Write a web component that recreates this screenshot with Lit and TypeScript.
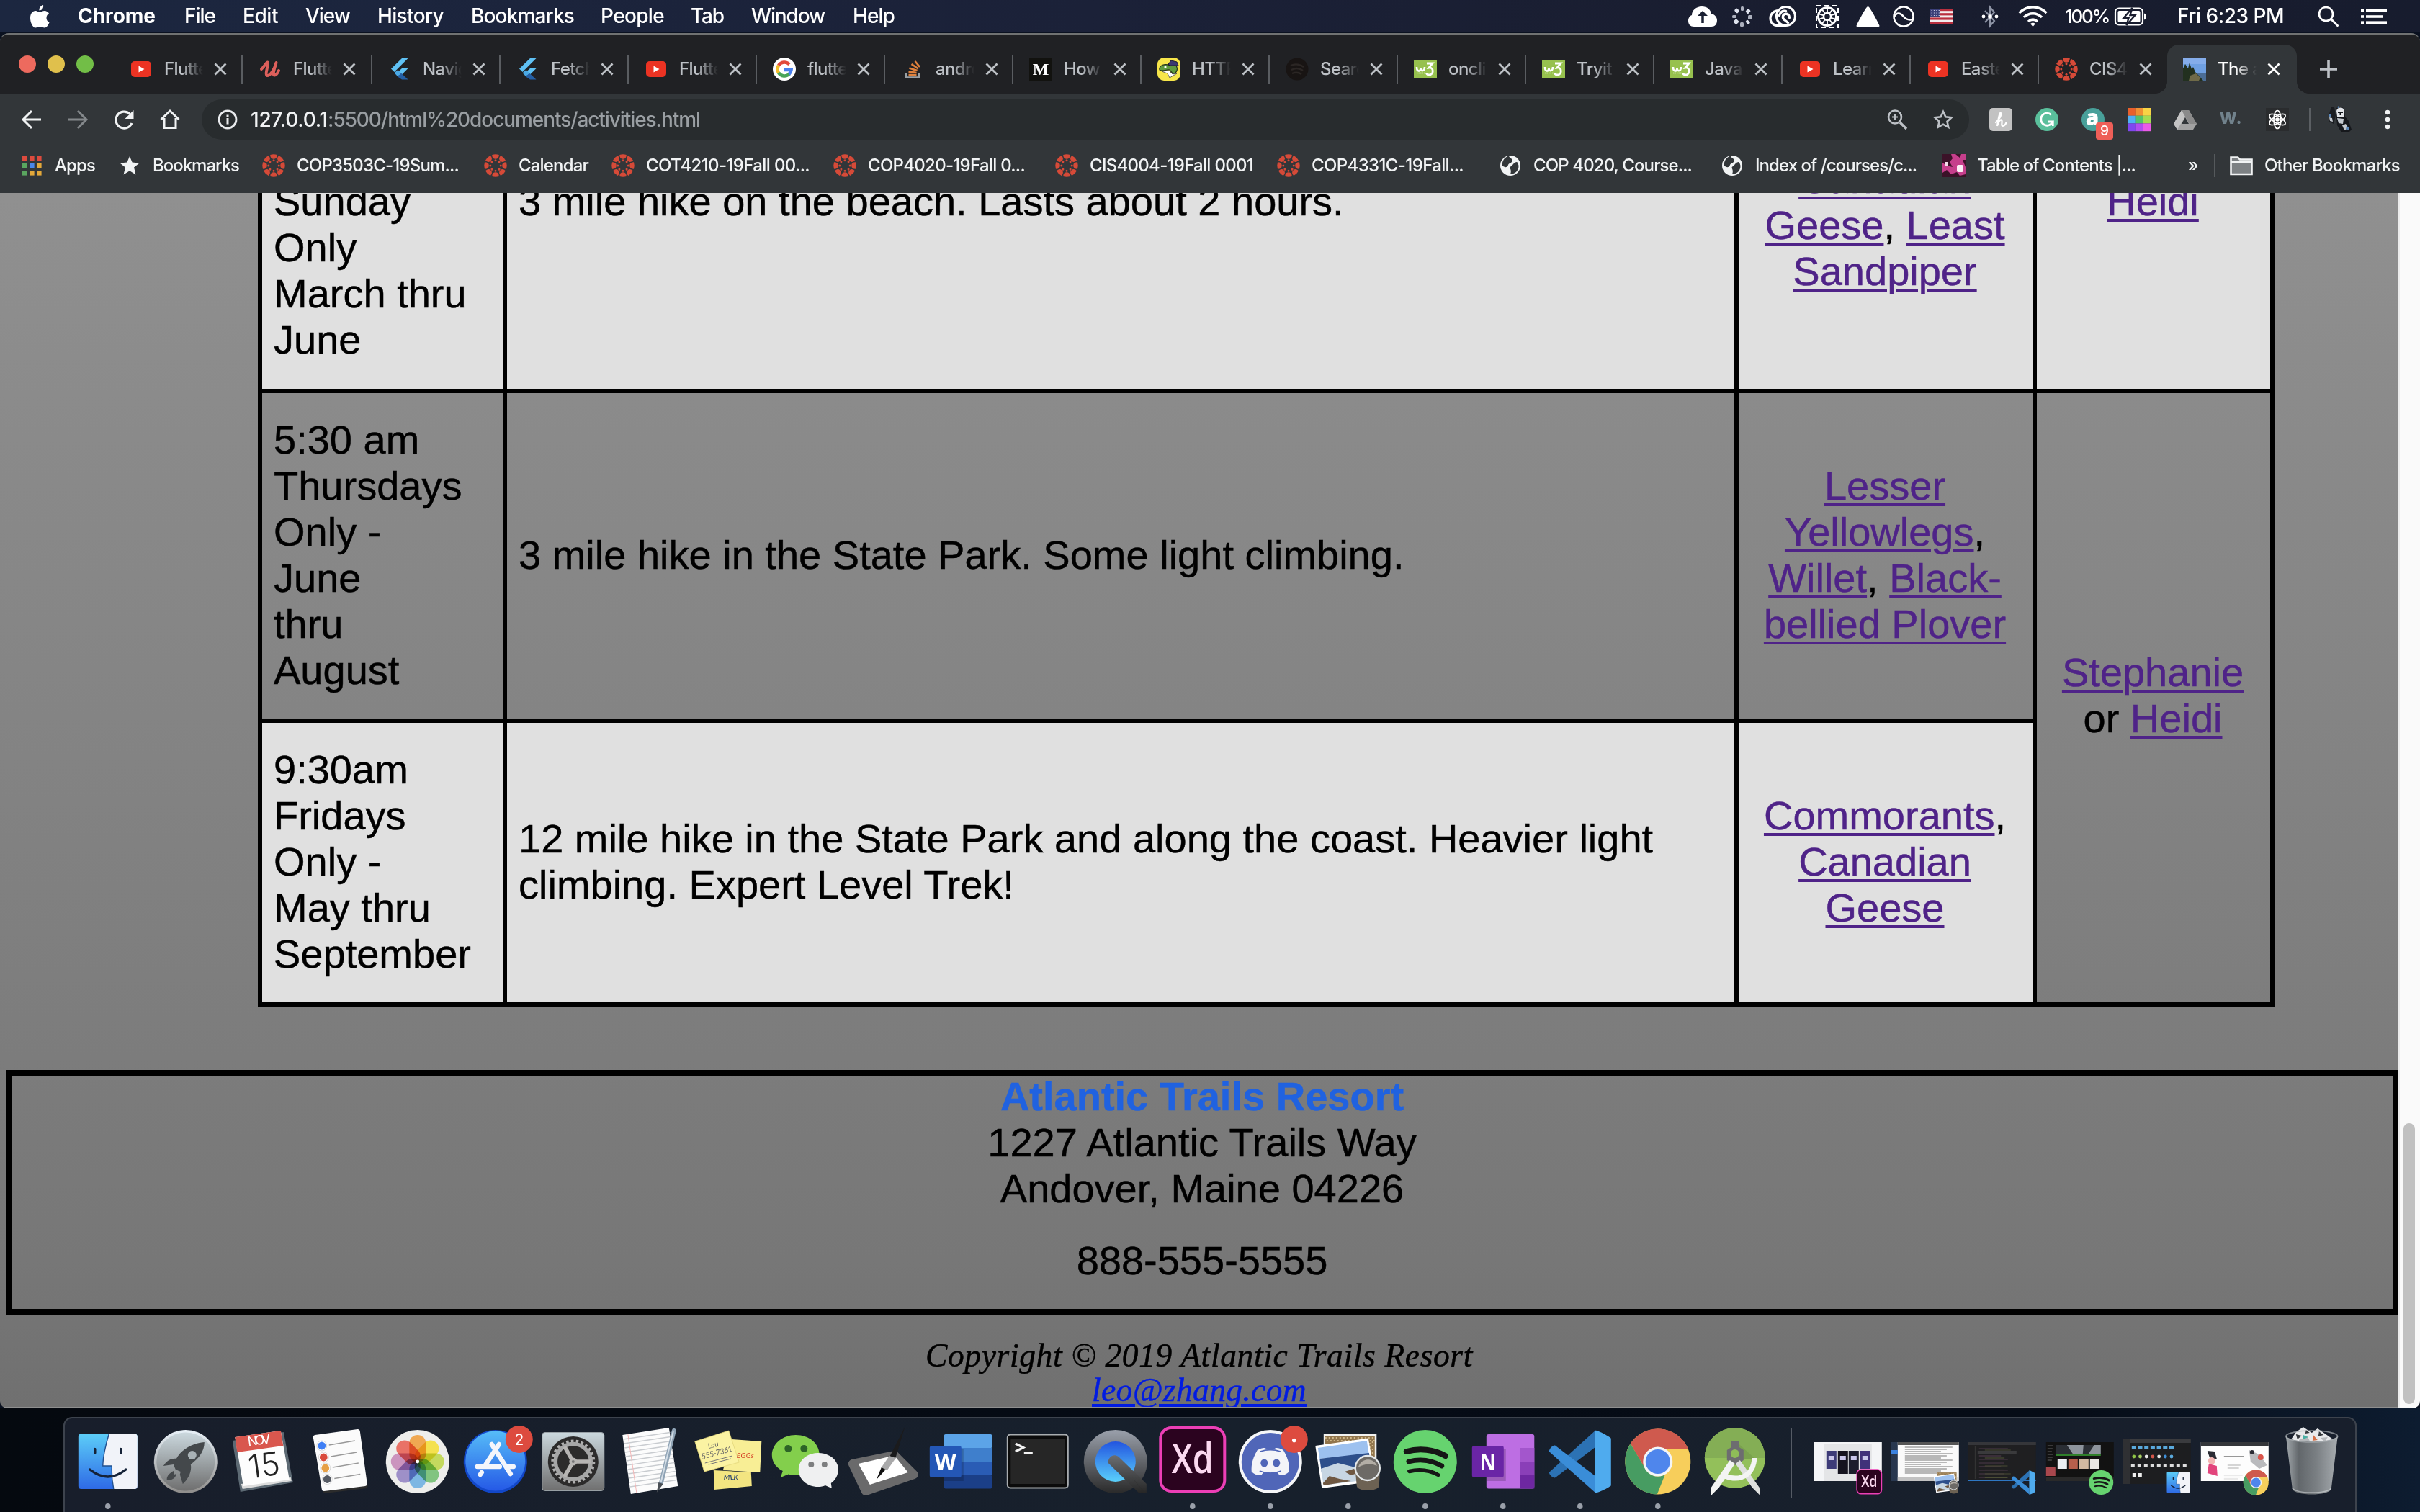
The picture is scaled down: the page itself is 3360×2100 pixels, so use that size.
import { LitElement, html, svg, css, nothing } from "lit";
import { customElement, property, query } from "lit/decorators.js";

/* A centred drawing surface: (0,0) is the middle of a w x h box. */
const ico = (w: number, h: number, body: unknown) => html`<svg
  width=${w} height=${h} viewBox="${-w / 2} ${-h / 2} ${w} ${h}" fill="none" style="display:block;flex:none;overflow:visible">${body}</svg>`;

const ring = (n: number, draw: (k: number) => unknown) =>
  Array.from({ length: n }, (_, k) => svg`<g transform="rotate(${(360 / n) * k})">${draw(k)}</g>`);

/* One line of text tracked so that it fills a given width. */
@customElement("fit-text")
class FitText extends LitElement {
  static styles = css`
    :host { display: inline-block; white-space: pre; flex: none; text-decoration: inherit; }
    .run { text-decoration: inherit; }
  `;
  @property({ type: Number }) w = 0;
  @property() text = "";
  @query(".run") run!: HTMLElement;
  firstUpdated() {
    const natural = this.run.getBoundingClientRect().width;
    const gap = (this.w - natural) / Math.max(1, this.text.length);
    this.run.style.letterSpacing = `${gap.toFixed(3)}px`;
  }
  render() {
    return html`<span class="run">${this.text}</span>`;
  }
}

const fit = (text: string, w: number) => html`<fit-text .text=${text} .w=${w}></fit-text>`;

/* ------------------------------------------------------------------ */
/* Menu bar                                                            */
/* ------------------------------------------------------------------ */
@customElement("mac-menu-bar")
class MacMenuBar extends LitElement {
  static styles = css`
    :host {
      display: flex; justify-content: space-between; align-items: center;
      height: 45px; color: #fff; font: 500 28px/45px Inter, "Liberation Sans", sans-serif;
      background: linear-gradient(90deg, #1c2740 0%, #1b2138 45%, #191d2f 75%, #171c2e 100%);
    }
    .menus, .status { display: grid; align-items: center; height: 45px; }
    .menus { margin-left: 42px; grid-template-columns: 66px 148px 81px 87px 100px 130px 180px 125px 84px 141px auto; }
    .status { width: 1016px; grid-template-columns: 60px 52px 65px 56px 51px 52px 71px 51px 65px 69px 87px 195px 60px auto; }
    .app { font-weight: 700; }
    .menus > *, .status > * { display: block; height: 45px; }
    .small { font-size: 26px; }
    .cell { display: flex !important; align-items: center; }
  `;
  render() {
    const cell = (x: unknown) => html`<div class="cell">${x}</div>`;
    return html`
      <div class="menus">
        ${cell(ico(26, 32, svg`<path fill="#fff" d="M5,-16 C6,-12 3,-8.500 -.5,-8.500 C-1,-12 1.500,-15 5,-16 Z M0,-6 C2,-6 4,-8 7,-8 C9,-8 11.500,-6.800 13,-4.500 C8,-1.500 8.500,6 13.500,8 C12,12 9.500,15.500 7,15.500 C4.500,15.500 3.500,14 .5,14 C-2.500,14 -3.500,15.500 -6,15.500 C-9.500,15.500 -13,8 -13,2 C-13,-4.500 -9.500,-8 -5.800,-8 C-3.200,-8 -1.500,-6 0,-6 Z"/>`))}
        <div class="app">${fit("Chrome", 108)}</div>
        <div>${fit("File", 43)}</div>
        <div>${fit("Edit", 49)}</div>
        <div>${fit("View", 62)}</div>
        <div>${fit("History", 92)}</div>
        <div>${fit("Bookmarks", 143)}</div>
        <div>${fit("People", 88)}</div>
        <div>${fit("Tab", 46)}</div>
        <div>${fit("Window", 102)}</div>
        <div>${fit("Help", 58)}</div>
      </div>
      <div class="status">
        ${cell(ico(40, 28, svg`<path fill="#fff" d="M-12,14 C-17,14 -20,11 -20,6 C-20,2 -18,-1 -15,-2 C-15,-9 -9,-14 -1,-14 C6,-14 11,-10 12,-4 C17,-3 20,1 20,5 C20,11 17,14 12,14 Z"/><path stroke="#1a2033" stroke-width="3.500" d="M0,9 V-3"/><path fill="#1a2033" d="M-7,-1 L0,-8 L7,-1 Z"/>`))}
        ${cell(ico(30, 30, ring(8, (k) => svg`<rect x="-2" y="-14" width="${4 + (k % 3)}" height="6" rx="1.500" fill="#dfe3ee" opacity="${0.75 + (k % 2) * 0.25}"/>`)))}
        ${cell(ico(39, 29, svg`<circle cx="4" cy="0" r="13" stroke="#fff" stroke-width="3.200"/><path stroke="#fff" stroke-width="3.200" d="M-6,-8 C-13,-8 -17.500,-3 -17.500,3 C-17.500,9 -13,13 -7,13 H4"/><path stroke="#fff" stroke-width="3.400" stroke-linecap="round" d="M9,2 C9,-2 6,-4 3,-3 C-1,-2 -1,3 2,5 L7,9 M-5,-1 C-4,-6 0,-8 4,-7"/>`))}
        ${cell(ico(32, 30, svg`<rect x="-15" y="-15" width="30" height="30" fill="none" stroke="#fff" stroke-width="2" stroke-dasharray="7 4"/><circle r="12.500" stroke="#fff" stroke-width="3"/>${ring(10, () => svg`<path stroke="#fff" stroke-width="1.800" d="M0,-5 V-12"/>`)}<circle r="5" stroke="#fff" stroke-width="2.500"/>`))}
        ${cell(ico(33, 28, svg`<path fill="#fff" stroke="#fff" stroke-width="2" stroke-linejoin="round" d="M0,-13 C2,-13 15,12 15,13 L-15,13 C-15,12 -2,-13 0,-13Z"/>`))}
        ${cell(ico(30, 30, svg`<circle r="13.500" stroke="#fff" stroke-width="2.600"/><path stroke="#fff" stroke-width="2.600" d="M-13,0 C-9,-7 -4,-5 0,0 C4,5 8,5 12.500,4"/>`))}
        ${cell(ico(32, 22, svg`<rect x="-16" y="-11" width="32" height="22" fill="#f3eeee"/>${[0, 1, 2, 3].map((k) => svg`<rect x="-16" y="${-11 + k * 6.2}" width="32" height="3.200" fill="#b9303f"/>`)}<rect x="-16" y="-11" width="14" height="12" fill="#3b3f78"/>${[0, 1, 2].map((k) => svg`<path stroke="#c9cbe6" stroke-width="1" stroke-dasharray="1.200 2.200" d="M-14.500,${-8.5 + k * 3.5} H-3"/>`)}`))}
        ${cell(ico(24, 32, svg`<path stroke="#8d93a4" stroke-width="2.200" d="M-7,-8 L6,6 L0,13 V-13 L6,-6 L-7,8"/><circle cx="-9" r="2.400" fill="#fff"/><circle r="2.800" fill="#fff"/><circle cx="9" r="2.400" fill="#fff"/>`))}
        ${cell(ico(41, 30, svg`<g stroke="#fff" stroke-width="3.400"><path d="M-19,-5 C-8,-16 8,-16 19,-5"/><path d="M-12.500,1 C-5,-6 5,-6 12.500,1"/><path d="M-6.500,7 C-2,3 2,3 6.500,7"/></g><path fill="#fff" d="M-3.500,10 L0,14 L3.500,10 C1,8 -1,8 -3.500,10Z"/>`))}
        <div class="small">${fit("100%", 61)}</div>
        ${cell(ico(45, 26, svg`<rect x="-21.500" y="-11.500" width="38" height="23" rx="5" stroke="#fff" stroke-width="2.200"/><rect x="-18" y="-8" width="31" height="16" rx="2" fill="#fff"/><path fill="#fff" d="M18.500,-4.500 C22.500,-3 22.500,3 18.500,4.500Z"/><path fill="#fff" stroke="#1a1e30" stroke-width="2.400" d="M2,-12 L-10,2 H-3 L-6,12 L6,-2 H-1 Z"/>`))}
        <div>${fit("Fri 6:23 PM", 148)}</div>
        ${cell(ico(30, 28, svg`<circle cx="-3.500" cy="-3.500" r="9.500" stroke="#fff" stroke-width="2.600"/><path stroke="#fff" stroke-width="3" stroke-linecap="round" d="M4,4 L12.500,12.500"/>`))}
        ${cell(ico(36, 22, svg`<g fill="#fff"><rect x="-18" y="-10" width="4" height="3.600"/><rect x="-11" y="-10" width="29" height="3.600"/><rect x="-18" y="-1.800" width="4" height="3.600"/><rect x="-11" y="-1.800" width="23" height="3.600"/><rect x="-18" y="6.400" width="4" height="3.600"/><rect x="-11" y="6.400" width="29" height="3.600"/></g>`))}
      </div>`;
  }
}

/* ------------------------------------------------------------------ */
/* Favicons                                                            */
/* ------------------------------------------------------------------ */
const canvasIcon = () => ico(32, 32, ring(8, () => svg`<path fill="#d64a38" d="M-4.800,-15 A15.800 15.800 0 0 1 4.800,-15 L4.400,-12.500 A4.600 4.600 0 0 1 -4.400,-12.500 Z"/><circle cy="-7.200" r="1.500" fill="#d64a38"/>`));
const youtube = () => ico(32, 32, svg`<rect x="-14" y="-11" width="28" height="22" rx="5" fill="#ec3323"/><path fill="#fff" d="M-3.500,-4.500 L4.500,0 L-3.500,4.500Z"/>`);
const udemy = () => ico(32, 32, svg`<path stroke="#dd5f5b" stroke-width="4" stroke-linecap="round" stroke-linejoin="round" d="M-12,0 C-8,-3 -6,-9 -3.500,-9.500 C-1,-9 -8,8 -4,9 C1,9 6,0 8.500,-9 C6,0 3,8 6,8.500 C9,9 11,4 12,2"/>`);
const flutter = () => ico(32, 32, svg`<path fill="#5fc1f4" d="M3,-15 L11.500,-15 L-7.500,4 L-12,-0.500 Z"/><path fill="#5fc1f4" d="M3,-1 L11.500,-1 L1,9.500 L-4,5.200Z"/><path fill="#2560a6" d="M-3.500,10 L2,5.500 L11.500,14.500 H3 Z"/><path fill="#4aa9e6" d="M-7.500,5.200 L-2.500,1 L2,5.500 L-3,10Z"/>`);
const google = () => ico(32, 32, svg`<circle r="16" fill="#fff"/><g stroke-width="4.600"><path stroke="#e24a3b" d="M-8,-5 A9.500 9.500 0 0 1 7,-6.500"/><path stroke="#f4bd2c" d="M-8,5 A9.500 9.500 0 0 1 -8,-5"/><path stroke="#4aa55a" d="M7,6.500 A9.500 9.500 0 0 1 -8,5"/><path stroke="#4a80ee" d="M0,1 H9.500 A9.500 9.500 0 0 1 6.500,7"/></g>`);
const stack = () => ico(32, 32, svg`<path stroke="#9aa0a4" stroke-width="2.400" d="M-9,5 V11.500 H9 V5"/><g stroke="#e0813c" stroke-width="2.600"><path d="M-5.500,8 H5.500"/><path d="M-5.500,3.500 L5.500,5"/><path d="M-4.500,-1.500 L6.500,2"/><path d="M-1.500,-7 L8,-.5"/><path d="M3.500,-11 L10,-3"/></g>`);
const medium = () => ico(32, 32, svg`<rect x="-16" y="-16" width="32" height="32" fill="#12120f"/><text y="8" text-anchor="middle" font-family="Liberation Serif, serif" font-weight="700" font-size="24" fill="#fff">M</text>`);
const snake = () => ico(32, 32, svg`<rect x="-16" y="-16" width="32" height="32" rx="9" fill="#f7e64a"/><path fill="#5f9a3e" stroke="#22301c" stroke-width="1.200" d="M-13,1 C-14,-6 -5,-8 1,-5 L10,-5 C13,0 11,5 6,7 L1,1 C-4,0 -9,4 -13,1Z"/><path fill="#3a3870" stroke="#1c1c30" d="M-1,-7 L3,-12 L11,-10 L13,-5 L1,-5Z"/><path fill="#fff" stroke="#444" stroke-width=".8" d="M-10,3 L0,2 L5,7 L11,6 L1,12 L-2,6Z"/><circle cx="-5" cy="-3" r="1.600" fill="#fff"/>`);
const darkSpot = () => ico(32, 32, svg`<circle r="15.500" fill="#181413"/><g stroke="#2b2624" stroke-width="2.400"><path d="M-9,-5 C-2,-8 5,-6 9,-3"/><path d="M-8,1 C-2,-2 4,-1 8,2"/><path d="M-7,6 C-2,4 3,5 6,7"/></g>`);
const w3 = () => ico(32, 32, svg`<rect x="-16" y="-13" width="32" height="26" rx="1.500" fill="#97c14e"/><path stroke="#fff" stroke-width="2.600" d="M-12,-3 C-12,4 -7,4 -6.500,-1 C-6,4 -1,3 -1,-3"/><path stroke="#fff" stroke-width="2.800" d="M2,-8 H10 L5,-2 C12,-3 12,8 5,8 C3,8 2,7 1.500,5.500"/><path stroke="#e6f2cf" stroke-width="1.500" stroke-dasharray="1.500 1" d="M-12,5.500 H0"/>`);
const photo = () => ico(32, 32, svg`<rect x="-16" y="-16" width="32" height="32" fill="#6fa0e2"/><rect x="-16" y="-16" width="32" height="9" fill="#85adea"/><rect x="-16" y="5" width="32" height="11" fill="#4b6d96"/><path fill="#22301f" d="M-16,-1 L-13,-7 L-9,-1 L-7,-9 L-4,0 L-2,-3 L1,4 L6,9 L12,16 H-16Z"/><path fill="#6f6a48" d="M-6,9 L2,6 L8,12 L6,16 H-8Z"/>`);
const globe = () => ico(32, 32, svg`<circle r="14" fill="#f1f3f4"/><path fill="#323639" d="M-2,-13.500 C-8,-12 -12,-6 -11,0 C-8,3 -4,3 -3,-1 C-2,-4 4,-4 3,-8 C2,-10 -1,-10 -2,-13.500Z M9,-5 C5,-5 4,-1 1,1 C-3,3 3,5 0,12 C6,12 12,7 11.500,0 C11,-2 10,-5 9,-5Z"/>`);
const pink = () => ico(32, 32, svg`<rect x="-16" y="-16" width="32" height="32" fill="#c63f8c"/><path fill="#3b1228" d="M-16,-16 H-4 L-2,-10 L-6,-5 L-2,2 L-10,0 L-16,-4Z M-16,10 L-10,6 L-4,12 L4,9 L8,14 L16,12 V16 H-16Z M2,-16 H10 L8,-11Z M12,-8 H16 V2Z"/><rect x="-13" y="-5" width="5" height="5" fill="#f4dcea"/><rect x="4" y="-1" width="9" height="10" rx="2" fill="#fbeff5"/>`);

interface TabInfo { icon: () => unknown; title: string; }
const TABS: TabInfo[] = [
  { icon: youtube, title: "Flutte" }, { icon: udemy, title: "Flutte" }, { icon: flutter, title: "Navig" },
  { icon: flutter, title: "Fetch" }, { icon: youtube, title: "Flutte" }, { icon: google, title: "flutte" },
  { icon: stack, title: "andro" }, { icon: medium, title: "How" }, { icon: snake, title: "HTTP" },
  { icon: darkSpot, title: "Searc" }, { icon: w3, title: "onclic" }, { icon: w3, title: "Tryit" },
  { icon: w3, title: "Java" }, { icon: youtube, title: "Learn" }, { icon: youtube, title: "Easte" },
  { icon: canvasIcon, title: "CIS4" }, { icon: photo, title: "The a" },
];

/* ------------------------------------------------------------------ */
/* Browser frame: tab strip, toolbar, bookmarks                        */
/* ------------------------------------------------------------------ */
@customElement("browser-frame")
class BrowserFrame extends LitElement {
  static styles = css`
    :host { display: block; height: 222px; box-sizing: border-box; border-top: 2px solid #707272; border-radius: 12px 12px 0 0;
      overflow: hidden; background: #323639; font: 450 24px/32px Inter, "Liberation Sans", sans-serif; color: #f1f3f4; }
    .strip { display: flex; align-items: flex-end; height: 82px; background: #202124; }
    .lights { display: flex; gap: 16px; width: 132px; margin-left: 26px; align-self: flex-start; margin-top: 29px; }
    .light { width: 24px; height: 24px; border-radius: 50%; }
    .red { background: #ed6a5e; } .yellow { background: #e0c04c; } .green { background: #72be47; }
    .tab { display: flex; align-items: center; box-sizing: border-box; width: 178px; height: 68px; padding-left: 22px; color: #bdc1c6; flex: none; }
    .tab:nth-child(3) { width: 180px; }
    .tab:nth-child(2) { width: 179px; }
    .title { width: 54px; margin-left: 16px; overflow: hidden; white-space: nowrap; letter-spacing: -0.6px;
      mask-image: linear-gradient(90deg, #000 45%, transparent 100%); }
    .close { margin-left: 15px; }
    .rule { width: 2px; height: 40px; background: #5a5d61; margin-left: auto; }
    .tab.active { background: #323639; border-radius: 16px 16px 0 0; color: #fff; position: relative; width: 180px; }
    .tab.active::before, .tab.active::after { content: ""; position: absolute; bottom: 0; width: 16px; height: 16px; }
    .tab.active::before { left: -16px; background: radial-gradient(circle at 0 0, transparent 15.500px, #323639 16px); }
    .tab.active::after { right: -16px; background: radial-gradient(circle at 100% 0, transparent 15.500px, #323639 16px); }
    .plus { margin: 0 0 22px 32px; }
    .bar { display: flex; align-items: center; height: 72px; }
    .nav { display: flex; gap: 32px; margin-left: 28px; width: 252px; flex: none; }
    .omni { display: flex; align-items: center; box-sizing: border-box; width: 2454px; height: 56px; border-radius: 28px; background: #282c2e; padding: 0 20px; font-size: 28px; flex: none; }
    .host { margin-left: 16px; color: #f1f3f4; }
    .path { color: #9a9fa3; }
    .tools { display: flex; gap: 32px; margin-left: auto; }
    .exts { display: flex; gap: 32px; margin-left: 28px; }
    .badged { position: relative; }
    .badge { position: absolute; left: 20px; top: 20px; width: 24px; height: 24px; border-radius: 4px; background: #ee5f58; color: #fff; font-size: 19px; line-height: 24px; text-align: center; }
    .vr { width: 2px; height: 32px; background: #5b5f63; margin-left: 28px; flex: none; }
    .avatar { margin-left: 23px; }
    .kebab { margin-left: 32px; }
    .marks { display: grid; align-items: center; height: 66px; padding-left: 28px; margin-top: -5px;
      grid-template-columns: 136px 200px 308px 177px 308px 308px 308px 308px 308px 308px 341px 36px 22px auto; }
    .mark { display: flex; align-items: center; gap: 16px; }
  `;
  render() {
    const mark = (icon: unknown, t: string, w: number) => html`<div class="mark">${icon}${fit(t, w)}</div>`;
    const last = TABS.length - 1;
    return html`
      <div class="strip">
        <div class="lights"><div class="light red"></div><div class="light yellow"></div><div class="light green"></div></div>
        ${TABS.map((t, k) => html`
          <div class="tab ${k === last ? "active" : ""}">
            ${t.icon()}<div class="title">${t.title}</div>
            <div class="close">${ico(18, 18, svg`<path stroke="${k === last ? "#fff" : "#bdc1c6"}" stroke-width="2.800" d="M-7.500,-7.500 L7.500,7.500 M7.500,-7.500 L-7.500,7.500"/>`)}</div>
            ${k < last ? html`<div class="rule" ?hidden=${k === last - 1}></div>` : nothing}
          </div>`)}
        <div class="plus">${ico(24, 24, svg`<path stroke="#bdc1c6" stroke-width="3.600" d="M-12,0 H12 M0,-12 V12"/>`)}</div>
      </div>
      <div class="bar">
        <div class="nav">
          ${ico(32, 32, svg`<path stroke="#f1f3f4" stroke-width="3" d="M13,0 H-11 M0,-12 L-12,0 L0,12"/>`)}
          ${ico(32, 32, svg`<path stroke="#84888b" stroke-width="3" d="M-13,0 H11 M0,-12 L12,0 L0,12"/>`)}
          ${ico(32, 32, svg`<path stroke="#f1f3f4" stroke-width="3.200" d="M11,5 A11.500 11.500 0 1 1 8,-8"/><path fill="#f1f3f4" d="M13.500,-13 V-1 H1.500Z"/>`)}
          ${ico(32, 32, svg`<path stroke="#f1f3f4" stroke-width="3" d="M-12.500,0 L0,-12 L12.500,0 M-8,-2 V11.500 H8 V-2"/>`)}
        </div>
        <div class="omni">
          ${ico(32, 32, svg`<circle r="12" stroke="#e8eaed" stroke-width="2.800"/><path stroke="#e8eaed" stroke-width="3" d="M0,-2 V6.500 M0,-6.500 V-3.800"/>`)}
          <span class="host">${fit("127.0.0.1", 107)}</span><span class="path">${fit(":5500/html%20documents/activities.html", 517)}</span>
          <div class="tools">
            ${ico(32, 32, svg`<circle cx="-3" cy="-3.500" r="9" stroke="#bdc1c6" stroke-width="2.600"/><path stroke="#bdc1c6" stroke-width="3.400" d="M4,4 L13,13"/><path stroke="#bdc1c6" stroke-width="2" d="M-7,-3.500 H1 M-3,-7.500 V.5"/>`)}
            ${ico(32, 32, svg`<path stroke="#bdc1c6" stroke-width="2.600" stroke-linejoin="miter" d="M0,-11 L3.400,-3.600 L11.500,-2.700 L5.500,2.800 L7.200,10.800 L0,6.700 L-7.200,10.800 L-5.500,2.800 L-11.500,-2.700 L-3.400,-3.600Z"/>`)}
          </div>
        </div>
        <div class="exts">
          ${ico(32, 32, svg`<rect x="-16" y="-16" width="32" height="32" rx="5" fill="#c2c2c2"/><path stroke="#fff" stroke-width="2.200" stroke-linecap="round" d="M-7,4 C-2,0 1,-6 0,-9 C-2,-11 -4,3 -5,9 C-2,0 1,-1 1.500,2 C2,5 0,9 3,9 C5,9 7,6 7.500,4"/>`)}
          ${ico(32, 32, svg`<circle r="16" fill="#5abf9b"/><path stroke="#fff" stroke-width="2.800" d="M6,-6.500 A8.500 8.500 0 1 0 8,3 H2 M8.300,2 V9"/>`)}
          <div class="badged">
            ${ico(32, 32, svg`<circle r="16" fill="#48a09a"/><text x="-1" y="8" text-anchor="middle" font-family="Open Sans, sans-serif" font-weight="800" font-size="30" fill="#fff">a</text>`)}
            <div class="badge">9</div>
          </div>
          ${ico(32, 32, ["#e8602c", "#f09133", "#f8d345", "#4fb0f5", "#53c26b", "#a4dc52", "#7f47f0", "#b04df0", "#ea5be8"].map((c, k) => svg`<rect x="${-16 + (k % 3) * 10.7}" y="${-16 + Math.floor(k / 3) * 10.7}" width="10.800" height="10.800" fill="${c}"/>`))}
          ${ico(32, 32, svg`<path fill="#a2a2a2" d="M-5,-13 H5 L16,6 L11,14 H-11 L-16,6Z"/><path fill="#c4c4c4" d="M-5,-13 L-16,6 L-11,14 L0,-4Z"/><path fill="#8a8a8a" d="M-5,-13 H5 L16,6 H6Z"/><path fill="#323639" d="M0,-3 L5,6 H-5Z"/>`)}
          ${ico(32, 32, svg`<text x="-1" y="6" text-anchor="middle" font-family="Inter, sans-serif" font-weight="800" font-size="23" textLength="31" fill="#71828c">W.</text>`)}
          ${ico(32, 32, svg`<rect x="-16" y="-16" width="32" height="32" fill="#2a2c2e"/>${ring(3, () => svg`<ellipse rx="5" ry="12.500" stroke="#fff" stroke-width="1.700"/>`)}<circle r="2.800" fill="#fff"/>`)}
        </div>
        <div class="vr"></div>
        <div class="avatar">${ico(36, 38, svg`<path fill="#1a1c20" d="M-12,-18 L-8,-17 L-6,-6 L-9,6 L-16,2 L-15,-8Z"/><path fill="#16181c" d="M-6,-14 C-4,-19 5,-19 6,-13 L7,-4 L12,2 L16,14 L12,18 L2,18 L-4,8Z"/><path fill="#e4e6ea" d="M-5,-12 C-4,-18 6,-18 6,-11 L5,-4 H-4Z"/><path stroke="#16181c" stroke-width="2" d="M-3,-10 H4 M.5,-10 V-6"/><path fill="#c3c8ce" d="M-4,-2 L5,-1 L4,6 L-2,5Z M3,8 L8,6 L11,12 L6,15Z M-15,-3 L-11,-2 L-10,3 L-14,2Z"/><path fill="#5c87b8" d="M-15,-8 L-12,-7 L-12,-3 L-15,-4Z M9,9 L13,11 L12,15 L8,13Z M-4,-17 L-2,-19 L-1,-15Z"/>`)}</div>
        <div class="kebab">${ico(32, 32, svg`<g fill="#f1f3f4"><circle cy="-10" r="3.200"/><circle r="3.200"/><circle cy="10" r="3.200"/></g>`)}</div>
      </div>
      <div class="marks">
        ${mark(ico(32, 32, ["#dd4b3e", "#dd4b3e", "#dd4b3e", "#5aa55f", "#4a86e8", "#e3a83a", "#5aa55f", "#e3a83a", "#e3a83a"].map((c, k) => svg`<rect x="${-13 + (k % 3) * 10}" y="${-13 + Math.floor(k / 3) * 10}" width="6.600" height="6.600" fill="${c}"/>`)), "Apps", 56)}
        ${mark(ico(32, 32, svg`<path fill="#f1f3f4" d="M0,-13 L3.600,-4.600 L13.500,-3.600 L6,2.600 L8.500,12.500 L0,7.200 L-8.500,12.500 L-6,2.600 L-13.500,-3.600 L-3.600,-4.600Z"/>`), "Bookmarks", 120)}
        ${mark(canvasIcon(), "COP3503C-19Sum...", 225)}
        ${mark(canvasIcon(), "Calendar", 97)}
        ${mark(canvasIcon(), "COT4210-19Fall 00...", 227)}
        ${mark(canvasIcon(), "COP4020-19Fall 0...", 218)}
        ${mark(canvasIcon(), "CIS4004-19Fall 0001", 227)}
        ${mark(canvasIcon(), "COP4331C-19Fall...", 211)}
        ${mark(globe(), "COP 4020, Course...", 220)}
        ${mark(globe(), "Index of /courses/c...", 224)}
        ${mark(pink(), "Table of Contents |...", 220)}
        <div>${fit("»", 15)}</div>
        ${ico(2, 32, svg`<rect x="-1" y="-16" width="2" height="32" fill="#55595c"/>`)}
        ${mark(ico(32, 32, svg`<path fill="#7d8184" stroke="#f1f3f4" stroke-width="2.600" d="M-14.500,-11.500 H-5 L-2,-8.500 H14.500 V12 H-14.500Z"/><path stroke="#f1f3f4" stroke-width="3" d="M-14,-4.500 H14"/>`), "Other Bookmarks", 188)}
      </div>`;
  }
}

/* ------------------------------------------------------------------ */
/* The page shown in the window                                        */
/* ------------------------------------------------------------------ */
@customElement("resort-page")
class ResortPage extends LitElement {
  static styles = css`
    :host { display: flex; height: 1688px; box-sizing: border-box; overflow: hidden; border-radius: 0 0 10px 10px;
      font: 400 56px/64px "Liberation Sans", Arial, sans-serif; color: #000; -webkit-text-stroke: 0.5px currentColor; }
    .body { width: 3330px; flex: none; box-sizing: border-box; border-bottom: 2px solid #8f8f8f;
      background: linear-gradient(180deg, #909090 0%, #8a8a8a 20%, #848484 43%, #7d7d7d 68%, #777 88%, #707070 100%); overflow: hidden; height: 1688px; }
    .sheet { display: grid; grid-template-columns: 340px 1710px 414px 330px; grid-template-rows: 278px 458px 394px;
      margin-left: 358px; width: 2794px; border-left: 6px solid #000; }
    .cell { display: flex; flex-direction: column; justify-content: center; box-sizing: border-box; min-height: 0;
      border: solid #000; border-width: 0 6px 6px 0; padding: 0 16px 3px; }
    .cell > div { white-space: nowrap; }
    .first { justify-content: flex-end; }
    .when { padding-bottom: 36px; }
    .one { padding-bottom: 228px; }
    .three { padding-bottom: 131px; }
    .light { background: #e0e0e0; }
    .mid { text-align: center; padding-right: 18px; }
    .tall { grid-row: 2 / 4; grid-column: 4; padding-bottom: 6px; }
    a { color: #4f2388; text-decoration: underline; text-decoration-thickness: 4px; text-underline-offset: 5px; }
    .contact { box-sizing: border-box; height: 340px; margin: 88px 0 0 8px; border: 8px solid #000; text-align: center; }
    .contact > div { position: relative; top: -3px; }
    .name { font-weight: 700; color: #2062e0; }
    .phone { margin-top: 36px; }
    .legal { margin-top: 33px; text-align: center; font: italic 400 45.500px/48px Georgia, "Liberation Serif", serif; }
    .legal > div { height: 48px; }
    .legal a { color: #001be2; text-underline-offset: 4px; }
    .track { width: 30px; background: #fafafa; display: flex; flex-direction: column; align-items: center; justify-content: flex-end; box-sizing: border-box; padding: 0 2px 6px 0; border-left: 2px solid #ececec; }
    .thumb { width: 16px; height: 390px; border-radius: 8px; background: #c1c1c1; }
  `;
  render() {
    return html`
      <div class="body">
        <div class="sheet">
          <div class="cell light first when"><div>Sunday<br />Only<br />March thru<br />June</div></div>
          <div class="cell light first one"><div>3 mile hike on the beach. Lasts about 2 hours.</div></div>
          <div class="cell light first three mid"><div><a>Canadian<br />Geese</a>, <a>Least<br />Sandpiper</a></div></div>
          <div class="cell light first one mid"><div><a>Heidi</a></div></div>
          <div class="cell"><div>5:30 am<br />Thursdays<br />Only -<br />June<br />thru<br />August</div></div>
          <div class="cell"><div>3 mile hike in the State Park. Some light climbing.</div></div>
          <div class="cell mid"><div><a>Lesser<br />Yellowlegs</a>,<br /><a>Willet</a>, <a>Black-<br />bellied Plover</a></div></div>
          <div class="cell mid tall"><div><a>Stephanie</a><br />or <a>Heidi</a></div></div>
          <div class="cell light"><div>9:30am<br />Fridays<br />Only -<br />May thru<br />September</div></div>
          <div class="cell light"><div>12 mile hike in the State Park and along the coast. Heavier light<br />climbing. Expert Level Trek!</div></div>
          <div class="cell light mid"><div><a>Commorants</a>,<br /><a>Canadian<br />Geese</a></div></div>
        </div>
        <div class="contact">
          <div class="name">Atlantic Trails Resort</div>
          <div>1227 Atlantic Trails Way</div>
          <div>Andover, Maine 04226</div>
          <div class="phone">888-555-5555</div>
        </div>
        <div class="legal">
          <div>${fit("Copyright © 2019 Atlantic Trails Resort", 760)}</div>
          <div><a>${fit("leo@zhang.com", 298)}</a></div>
        </div>
      </div>
      <div class="track"><div class="thumb"></div></div>`;
  }
}

/* ------------------------------------------------------------------ */
/* Dock drawings, centred on (0,0)                                     */
/* ------------------------------------------------------------------ */
const finder = svg`<rect x="-41" y="-38.500" width="82" height="76.500" rx="4" fill="url(#gBlue)"/>
  <path fill="#f1f3f9" d="M1.500,-38.500 C-4,-20 -7,-8 -7,6 H5.500 C5,18 6,28 8,38 H37 Q41,38 41,34 V-34.500 Q41,-38.500 37,-38.500Z"/>
  <path stroke="#152238" stroke-width="3.400" stroke-linecap="round" d="M-18,-17.500 V-12 M18,-17.500 V-12 M-25,11 Q0,31 25,11"/>
  <path stroke="#20508f" stroke-width="1.400" d="M1.500,-38.500 C-4,-20 -7,-8 -7,6 H5.500 C5,18 6,28 8,38"/>`;
const launchpad = svg`<circle r="44" fill="url(#gRim)"/><circle r="40.500" fill="url(#gSteel)"/>
  <path fill="#44484b" d="M26,-27 C10,-26 -6,-17 -13,-4 C-21,-5 -27,0 -31,6 L-17,4 L-14,11 L-7,14 L-8,18 L-4,31 C3,25 9,14 7,4 C19,-5 26,-15 26,-27Z M-17,13 C-22,16 -27,20 -26,26 C-19,26 -14,23 -13,17 L-16,18Z"/><circle cx="9" cy="-9" r="6" fill="#a9b2b6"/>`;
const calendar = svg`<path fill="#5d6a74" d="M-42,-29 L29,-41 L42,29 L-31,42Z"/><path fill="#dcdcdc" d="M-30,31 L39,22 L40,27 L-28,38Z"/>
  <path fill="#fdfdfd" d="M-38.500,-34 L25,-43 L37,25 L-27,34Z"/><path fill="#d9574e" d="M-38.500,-34 L25,-43 L28.500,-22 L-35.500,-13Z"/>
  <g transform="rotate(-8)" fill="#fff" text-anchor="middle" font-family="Inter, sans-serif"><text x="-1" y="-24" font-size="18" textLength="32">NOV</text><text x="1" y="21" font-size="45" font-weight="300" fill="#222" textLength="44" lengthAdjust="spacingAndGlyphs">15</text></g>`;
const reminders = svg`<path fill="#2c2c2c" d="M-25,41 L38,32 L37,37 L-22,44Z"/><path fill="#fbfbfb" stroke="#fbfbfb" stroke-width="6" stroke-linejoin="round" d="M-35,-34 L24,-42 L34,31 L-23,38Z"/>
  ${[["#3f7ff5", -26, -22], ["#d94b3d", -23.5, -6], ["#e6a046", -21, 9], ["#565b64", -18.5, 24.5]].map(([c, x, y]) => svg`<circle cx="${x}" cy="${y}" r="7" fill="#fff" stroke="#d8d8d8" stroke-width="1"/><circle cx="${x}" cy="${y}" r="5.400" fill="${c}"/><path stroke="#999" stroke-width="1.400" d="M${Number(x) + 10},${Number(y) - 1} l36,-6"/>`)}`;
const photos = svg`<circle r="44" fill="#eeeeec"/><g style="isolation:isolate">${["#efa041", "#f4df3e", "#bfd64f", "#74bf74", "#70b0e2", "#9585c5", "#c789b9", "#e86458"].map((c, k) => svg`<rect transform="rotate(${k * 45})" x="-11.500" y="-37" width="23" height="38" rx="11.500" fill="${c}" opacity=".9" style="mix-blend-mode:multiply"/>`)}</g><circle r="2.400" fill="#fff"/>`;
const appStore = svg`<circle r="44" fill="#1247c8"/><circle r="41.500" cy="-1" fill="url(#gStore)"/>
  <g stroke="#f4f6fb" stroke-width="6.500" stroke-linecap="round"><path d="M-25,7 H6 M16,7 H25"/><path d="M5,-24 L-14,5 M-19,15 L-21,18"/><path d="M-5,-24 L21,17"/></g>
  <circle cx="33" cy="-31" r="19" fill="#dd4b3f"/><text x="33" y="-23.500" text-anchor="middle" font-family="Inter, sans-serif" font-size="21" fill="#fff">2</text>`;
const prefs = svg`<rect x="-43" y="-40.500" width="86" height="81" rx="4" fill="url(#gSteel)" stroke="#9aa2a6" stroke-width="1"/><circle r="35" fill="#2c2b2b"/>
  <circle r="28.500" stroke="#b0b0b0" stroke-width="4" stroke-dasharray="3.600 3.300"/><circle r="24.500" stroke="#a6a6a6" stroke-width="5.500"/><g transform="rotate(-30)">${ring(3, () => svg`<path stroke="#b7b5b3" stroke-width="5.500" d="M0,0 V-24" transform="rotate(120)"/>`)}</g><circle r="5.500" fill="#b7b5b3"/><circle r="2" fill="#777"/>`;
const textEdit = svg`<path fill="#fcfcfc" d="M-38.500,-37 L26,-47 L38.500,34 L-27,45Z"/>${Array.from({ length: 12 }, (_, k) => svg`<path stroke="#c9ccd0" stroke-width="1.300" d="M${-37.5 + k * 0.85},${-31 + k * 6} l65,-9.500"/>`)}
  <path stroke="#f3b6b6" stroke-width="1" d="M-31,-38 L-19,43"/><path stroke="#8fa3b5" stroke-width="6" stroke-linecap="round" d="M33,-43 L15,30"/><path stroke="#d3dde6" stroke-width="2" d="M32,-42 L15,28"/><path fill="#4a4f55" d="M11.500,29 L18,31 L9,43Z"/>`;
const stickies = svg`<path fill="#f3e581" d="M-20,12 L32,15 L33,34 L-19,39Z"/><path fill="#f8ee95" d="M5,-31 L46.500,-28 L44.500,15 L-7,12Z"/><path fill="#fbf3a3" stroke="#e2d57a" stroke-width=".8" d="M-46,-28 L1,-43 L15.500,1 L-33,14Z"/>
  <g font-family="Lato, sans-serif" font-style="italic"><text transform="translate(-27,-18) rotate(-14)" font-size="10" fill="#666">Lou</text><text transform="translate(-36,-3) rotate(-15)" font-size="11" fill="#666" textLength="44">555-7361</text><text x="12" y="-5" font-size="10" fill="#d43d25" textLength="24">EGGs</text><text x="-6" y="25" font-size="10" fill="#27406e" textLength="20">MILK</text></g><path stroke="#777" stroke-width="1" d="M-32,2 L6,-8 M-27,4 L4,-4"/>`;
const wechat = svg`<path fill="#83cf4c" d="M-13,-37 C6,-37 20,-25 20,-9 C20,7 6,19 -13,19 C-16,19 -20,18.500 -23,17.500 L-34,22 L-31,13 C-41,8 -46,0 -46,-9 C-46,-25 -31,-37 -13,-37Z"/><circle cx="-23.500" cy="-18" r="5" fill="#2d6427"/><circle cx="-1.500" cy="-18" r="5" fill="#2d6427"/>
  <path fill="#eff0f1" d="M18,-12 C33,-12 46,-3 46,11 C46,19 42,26 36,30 L37,37 L28,33 C25,34.500 22,35 18,35 C3,35 -9,25 -9,11 C-9,-2 3,-12 18,-12Z"/><circle cx="8.500" cy="4" r="4" fill="#7d7f80"/><circle cx="27" cy="4" r="4" fill="#7d7f80"/>`;
const tablet = svg`<path fill="#6a6a6b" stroke="#6a6a6b" stroke-width="12" stroke-linejoin="round" d="M-42,3 L16,-9 L43,18 L-24,41Z"/><path fill="#fff" d="M-34,3 L16,-8.500 L35,15 L-18,32Z"/>
  <path fill="#1b1b1c" d="M30.500,-48 L17,-3 L9,-6Z"/><path fill="#a9a9aa" d="M9,-8 L18,-5 L6,12 L-2,8Z"/><path fill="#111" d="M-2,8 L4,11 L-9,25Z"/>`;
const office = (bands: string[], box: string, letter: string, strip: boolean) => svg`<g>
  ${strip
    ? svg`<rect x="-23" y="-38" width="66.500" height="75.500" rx="3" fill="${bands[0]}"/>${[1, 2, 3].map((k) => svg`<rect x="24" y="${-38 + k * 19}" width="19.500" height="${k === 3 ? 18.5 : 19}" fill="${bands[k]}"/>`)}`
    : bands.map((c, k) => svg`<rect x="-23" y="${-38 + k * 19}" width="66.500" height="${k === 3 ? 18.5 : 19.3}" rx="${k % 3 === 0 ? 2 : 0}" fill="${c}"/>`)}
  <rect x="-23" y="-18" width="27" height="45" fill="#000" opacity=".18"/><rect x="-43" y="-22" width="44" height="44" rx="3" fill="${box}"/>
  <text x="-21" y="11.500" text-anchor="middle" font-family="Open Sans, sans-serif" font-weight="700" font-size="33" textLength="${letter === "W" ? 30 : 22}" lengthAdjust="spacingAndGlyphs" fill="#fff">${letter}</text></g>`;
const terminal = svg`<rect x="-42" y="-37.500" width="84" height="74" rx="4" fill="#0b0b0b" stroke="#a9adb0" stroke-width="2"/><rect x="-37.500" y="-32" width="75" height="63" fill="#262626"/><path stroke="#f2f2f2" stroke-width="3.200" d="M-31,-25 L-20,-19.500 L-31,-14"/><path stroke="#f2f2f2" stroke-width="3" d="M-19,-11.500 H-7"/>`;
const quicktime = svg`<circle r="44" fill="url(#gQt)"/><circle r="28" fill="url(#gQb)"/><path fill="url(#gQh)" d="M-10,2 C-11,-6 -3,-12 4,-7 L36,24 L43,31 V43 H32 Z"/><path stroke="#2b2b2b" stroke-width=".8" opacity=".5" d="M26,26 L39,41"/>`;
const xd = svg`<rect x="-44.500" y="-47" width="89" height="88" rx="15" fill="#2b031f" stroke="#ec3fb6" stroke-width="4"/><text x="0" y="16" text-anchor="middle" font-family="Open Sans, sans-serif" font-weight="600" font-size="58" textLength="58" lengthAdjust="spacingAndGlyphs" fill="#fbd9f0">Xd</text>`;
const discord = svg`<circle r="44" fill="#f5f6f8"/><circle r="40" fill="#5066b8"/>
  <path fill="#f3f4f8" d="M-18,-16 C-12,-19 -8,-20 -6,-18 H6 C8,-20 12,-19 18,-16 C24,-6 27,4 26,14 C22,18 17,20 12,18 L9,14 C4,16 -4,16 -9,14 L-12,18 C-17,20 -22,18 -26,14 C-27,4 -24,-6 -18,-16Z"/><ellipse cx="-8.500" cy="2" rx="5" ry="5.500" fill="#5066b8"/><ellipse cx="8.500" cy="2" rx="5" ry="5.500" fill="#5066b8"/><path stroke="#5066b8" stroke-width="1.600" d="M-15,13 C-5,17 5,17 15,13 M-14,-14 C-5,-17 5,-17 14,-14"/>
  <circle cx="33" cy="-31" r="19" fill="#dd4b3f"/><circle cx="33" cy="-29.500" r="2.800" fill="#fff"/>`;
const preview = svg`<rect x="-34" y="-38.500" width="73.500" height="62" fill="#f2f2f0"/><rect x="-32" y="-36" width="69" height="56" fill="#92764d"/><path stroke="#d0b88a" stroke-width="2" stroke-dasharray="2 3" d="M-32,-33 H37 M-30,-29 H37 M30,-26 V10 M34,-28 V12"/>
  <path fill="#fff" d="M-45.500,-22 L28,-32.500 L38.500,27 L-36.500,37Z"/><path fill="#9dc1ef" d="M-42,-19 L26,-29 L29,-10 L-39.500,-4Z"/><path fill="#2d4f8b" d="M-39.500,-4 L29,-12 L32,6 L-37,14Z"/><path fill="#c7d6e3" d="M-38,10 L-14,2 L10,8 L33,4 L35,24 L-34,33Z"/><path fill="#6f5842" d="M-35,30 L-26,20 L-12,24 L4,27 L-34,33Z M-5,14 L8,10 L16,15 L4,19Z"/>
  <path fill="#6d6253" d="M10,12 L12,34 C14,42 40,42 43,34 L44,12Z"/><circle cx="27" cy="9" r="17" fill="#6d6a66" stroke="#e4e8ea" stroke-width="2.400"/><path fill="#b3aea6" d="M14,8 C18,-6 36,-6 40,6 C32,2 22,3 14,8Z"/>`;
const spotify = svg`<circle r="44" fill="#66d36f"/><g stroke="#161616" stroke-linecap="round"><path stroke-width="8" d="M-26,-14 C-8,-19 12,-17 28,-8"/><path stroke-width="6.800" d="M-23,0 C-7,-4 9,-2 23,6"/><path stroke-width="5.400" d="M-22,13.500 C-7,10 6,12 18,18.500"/></g>`;
const vscode = svg`<path fill="#2c72b4" d="M21,-43 V-20 L-34,22 C-37,24 -43,18 -43,15Z"/><path fill="#3a8dd8" d="M-43,-14 C-43,-18 -37,-24 -34,-22 L21,20 V43Z"/><path fill="#4fabee" d="M21,-43 C22,-45 43,-34 43,-32 V33 C43,35 22,45 21,43Z"/>`;
const chrome = svg`<circle r="45.500" fill="#f7ce5b"/><path fill="#cf5a4e" d="M-38,-25 A45.500 45.500 0 0 1 42,-18 H0 A20 20 0 0 0 -18,9Z"/><path fill="#479c62" d="M-38,-25 L-18,9 A20 20 0 0 0 10,18 L-1,45.500 A45.500 45.500 0 0 1 -38,-25Z"/><circle r="20.500" fill="#f4f5f6"/><circle r="17" fill="#4f86ec"/>`;
const studio = svg`<circle cy="-5" r="42" fill="#93c05a"/><path fill="#84ae55" d="M-42,-5 A42 42 0 0 1 42,-5Z"/><path fill="#7aa24e" d="M6,-24 L28,-4 H-6Z"/><path fill="#6d6d70" d="M-5,-28 H6 V-20 L12,-16 V-2 L1,5 L-11,-2 V-16 L-5,-20Z"/><circle cy="-11" r="6" fill="#8fbc58"/>
  <path fill="#f3f4f3" d="M-7,-2 L0,3 L-22,36 L-33,47 V36Z"/><path fill="#dfe0df" d="M7,-2 L1,3 L24,36 L35,47 L34,36Z"/><path stroke="#f3f4f3" stroke-width="7" d="M-19,17 C-4,28 26,26 27,-5"/>`;

const small = (body: unknown) => svg`<g transform="translate(29.500,29) scale(.385)">${body}</g>`;
const bars = (n: number, x: number, y: number, w: number, dy: number, c: string) =>
  Array.from({ length: n }, (_, k) => svg`<path stroke="${c}" stroke-width="1.200" d="M${x},${y + k * dy} h${w - (k % 3) * w * 0.12}"/>`);

const thumbXd = svg`<rect x="-47" y="-27" width="94" height="54" fill="#f4f5f7"/><rect x="-33" y="-25" width="66" height="52" fill="#e4e5e7"/>${[["#3d3b78", -30, 25], ["#15131f", -14, 32], ["#1c1d2c", 1, 32], ["#41317a", 17, 25]].map(([c, x, h]) => svg`<rect x="${x}" y="-15" width="14" height="${h}" fill="${c}"/><rect x="${Number(x) + 3}" y="-8" width="8" height="6" fill="#c9c6ea"/>`)}${small(xd)}`;
const thumbDoc = svg`<rect x="-47" y="-27" width="94" height="54" fill="#fafafa"/><rect x="-47" y="-27" width="9" height="54" fill="#28374f"/><rect x="-47" y="-16" width="9" height="5" fill="#3b82e0"/><rect x="-38" y="-27" width="85" height="4" fill="#555"/>${bars(13, -28, -20, 66, 3, "#777")}<rect x="-38" y="22" width="85" height="5" fill="#c2c2c2"/>${small(preview)}`;
const thumbCode = svg`<rect x="-47" y="-27" width="94" height="54" fill="#1f1f21"/><rect x="-47" y="-27" width="94" height="4" fill="#35363a"/><rect x="-38" y="-22" width="2" height="46" fill="#333"/>${bars(9, -32, -18, 40, 5, "#4d3a4b")}${bars(8, -24, -16, 36, 5.5, "#4a4d35")}<rect x="-34" y="-15" width="54" height="4" fill="#3a3a3c"/><rect x="-47" y="25" width="94" height="2" fill="#2e77c4"/>${small(vscode)}`;
const thumbMusic = svg`<rect x="-47" y="-27" width="94" height="54" fill="#121212"/><rect x="-33" y="-23" width="62" height="12" fill="#8d949c"/><path fill="#2a2e34" d="M-33,-23 H-18 L-10,-11 H-33Z M5,-23 H20 L12,-11 H4Z"/><rect x="-33" y="-11" width="62" height="3" fill="#2f7f2a"/>${bars(6, -45, -22, 8, 4, "#555")}<rect x="-47" y="8" width="13" height="12" fill="#a8474d"/>${["#eceef2", "#b65f4c", "#d2b9a1", "#e8e5e2"].map((c, k) => svg`<rect x="${-31 + k * 15}" y="-3" width="13" height="13" fill="${c}"/>`)}<rect x="-47" y="22" width="94" height="5" fill="#2a2a2a"/>${small(spotify)}`;
const thumbFiles = svg`<rect x="-47" y="-31" width="94" height="62" fill="#1d1e20"/><rect x="-47" y="-31" width="10" height="62" fill="#2f3033"/><rect x="-37" y="-31" width="84" height="5" fill="#3a3b3e"/>${Array.from({ length: 7 }, (_, k) => svg`<rect x="${-35 + k * 8.7}" y="-22" width="6" height="5" fill="#5aa9dc"/><circle cx="${-32 + k * 8.7}" cy="-7" r="2.400" fill="${["#8fc447", "#a6cf63", "#e9e9e9", "#d2564a", "#e9e9e9", "#3f8fd8", "#5aa9dc"][k]}"/>`)}${Array.from({ length: 9 }, (_, k) => svg`<rect x="${-36 + k * 9}" y="4" width="5" height="3" fill="#ddd"/>`)}<rect x="-34" y="16" width="5" height="5" fill="#eee"/><rect x="-26" y="16" width="5" height="5" fill="#eee"/>${small(finder)}`;
const thumbWeb = svg`<rect x="-47" y="-27" width="94" height="54" fill="#fdfdfd"/><rect x="-47" y="-27" width="94" height="6" fill="#34363a"/><path fill="#2a2b33" d="M-38,-15 L-28,-14 L-25,-4 L-33,0Z"/><path fill="#e2447c" d="M-36,3 L-25,6 L-24,20 L-38,16Z"/><circle cx="-32" cy="-1" r="5" fill="#f2b6b3"/><path fill="#b9babd" d="M20,-16 L34,-10 L45,5 L34,10 L22,0Z"/><circle cx="36" cy="-6" r="4" fill="#d9534a"/><circle cx="24" cy="-13" r="3" fill="#2a2b33"/>${bars(1, -15, -7, 28, 3, "#555")}${bars(2, -10, 5, 18, 4, "#bbb")}${bars(3, -15, 19, 26, 2.5, "#ddd")}${small(chrome)}`;
const trash = svg`<path fill="#e7e8ea" d="M-28,-32 L-22,-41 L-12,-48 L0,-40 L8,-46 L18,-39 L28,-32 L22,-24 H-25Z"/><path fill="#34383c" d="M-22,-38 L-14,-36 L-20,-31Z M-8,-44 L-3,-40 L-9,-39Z M10,-42 L16,-37 L9,-35Z"/><path fill="#b5b8bb" d="M-18,-30 L-6,-35 L-2,-27 L-14,-25Z M12,-33 L22,-34 L18,-27Z"/><path fill="#d46f46" d="M2,-37 L8,-30 L1,-29Z"/><path fill="#48b0a4" d="M-12,-37 L-5,-34 L-12,-31Z"/>
  <path fill="url(#gCan)" d="M-36,-36 C-30,-25 30,-25 36,-36 L27,38 C24,48 -24,48 -27,38Z"/><ellipse cy="-35" rx="36" ry="8" stroke="#a9afb4" stroke-width="1.600" opacity=".7"/><path stroke="#e2e6e8" stroke-width="1.400" opacity=".5" d="M-27,37 C-20,45 20,45 27,37"/>`;

interface DockItem { art: unknown; running?: boolean; }
const APPS: DockItem[] = [
  { art: finder, running: true }, { art: launchpad }, { art: calendar }, { art: reminders }, { art: photos },
  { art: appStore }, { art: prefs }, { art: textEdit }, { art: stickies }, { art: wechat }, { art: tablet },
  { art: office(["#5ca4e8", "#3f7fcc", "#2a5cb5", "#1b3f88"], "#2457b6", "W", false) }, { art: terminal }, { art: quicktime },
  { art: xd, running: true }, { art: discord, running: true }, { art: preview, running: true }, { art: spotify, running: true },
  { art: office(["#bd6ee3", "#a356cc", "#8a3fb8", "#6e27a1"], "#6a25a6", "N", true), running: true },
  { art: vscode, running: true }, { art: chrome, running: true }, { art: studio },
];
const WINDOWS = [thumbXd, thumbDoc, thumbCode, thumbMusic, thumbFiles, thumbWeb, trash];

const lg = (id: string, a: string, b: string) => svg`<linearGradient id="${id}" x1="0" y1="0" x2="0" y2="1"><stop offset="0" stop-color="${a}"/><stop offset="1" stop-color="${b}"/></linearGradient>`;
const DEFS = svg`<defs>${lg("gBlue", "#5ccdf8", "#2e6ae6")}${lg("gRim", "#e8f1f8", "#8f8d8b")}${lg("gSteel", "#cbd8de", "#6f6f6f")}${lg("gStore", "#56bcf8", "#2559e6")}${lg("gQt", "#9aa0ab", "#2a2a2a")}${lg("gQb", "#2355e0", "#5ad0fb")}${lg("gQh", "#6b6e72", "#272727")}<linearGradient id="gCan" x1="0" x2="1"><stop offset="0" stop-color="#a2a8ac"/><stop offset=".25" stop-color="#62676b"/><stop offset=".6" stop-color="#7b8084"/><stop offset="1" stop-color="#a7acb0"/></linearGradient></defs>`;

@customElement("mac-dock")
class MacDock extends LitElement {
  static styles = css`
    :host { display: block; height: 144px; overflow: hidden; background: linear-gradient(90deg, #05090f 0%, #050b15 50%, #060c16 85%, #0d1c30 100%); }
    .dock { display: flex; box-sizing: border-box; width: 3184px; height: 150px; margin: 12px 0 0 88px; padding: 0 6px;
      border: 2px solid #3d434d; border-radius: 12px; background: linear-gradient(90deg, #181e2b, #17202c 50%, #181f2c); }
    .slot { width: 107.600px; height: 132px; flex: none; }
    .window { width: 107.400px; }
    .gap { width: 48.600px; height: 132px; flex: none; display: flex; justify-content: center; }
    .line { width: 2px; height: 96px; margin-top: 14px; background: #555b65; }
    svg { display: block; overflow: visible; }
  `;
  render() {
    const slot = (art: unknown, cls: string, running = false) => html`<div class="slot ${cls}"><svg width="107.600" height="132" viewBox="-53.800 -60 107.600 132" fill="none">${DEFS}${art}${running ? svg`<ellipse cy="62" rx="3.800" ry="4" fill="#9aa0aa"/>` : nothing}</svg></div>`;
    return html`<div class="dock">
      ${APPS.map((a) => slot(a.art, "", a.running))}
      <div class="gap"><div class="line"></div></div>
      ${WINDOWS.map((w) => slot(w, "window"))}
    </div>`;
  }
}

@customElement("app-root")
class AppRoot extends LitElement {
  static styles = css`
    :host { display: flex; flex-direction: column; width: 3360px; height: 2100px; overflow: hidden; background: #0a1120; }
    browser-frame { margin-top: 1px; }
  `;
  render() {
    return html`<mac-menu-bar></mac-menu-bar><browser-frame></browser-frame><resort-page></resort-page><mac-dock></mac-dock>`;
  }
}
